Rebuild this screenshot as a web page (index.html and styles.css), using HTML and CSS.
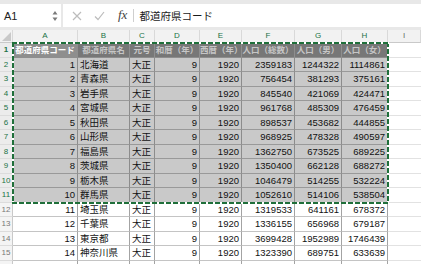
FILE: index.html
```html
<!DOCTYPE html>
<html lang="ja">
<head>
    <meta charset="UTF-8">
    <meta name="viewport" content="width=device-width, initial-scale=1.0">
    <title>都道府県別人口</title>
    <link rel="stylesheet" href="styles.css">
</head>
<body>
    <div class="toolbar">
        <div class="namebox">
            <span>A1</span>
            <svg class="spin" width="6" height="12" viewBox="0 0 6 12"><path d="M3 1 L5.5 4.5 L0.5 4.5 Z M3 11 L5.5 7.5 L0.5 7.5 Z" fill="#7a7a7a"/></svg>
        </div>
        <div class="formula">
            <svg class="btn-x" width="10" height="10" viewBox="0 0 10 10"><path d="M1 1 L9 9 M9 1 L1 9" stroke="#bcbcbc" stroke-width="1.2"/></svg>
            <svg class="btn-ok" width="11" height="10" viewBox="0 0 11 10"><path d="M1 5.5 L4 8.5 L10 1" stroke="#bcbcbc" stroke-width="1.2" fill="none"/></svg>
            <span class="fx">fx</span>
            <span class="divider"></span>
            <span class="value">都道府県コード</span>
        </div>
    </div>

    <div class="sheet-wrap">
        <div class="sheet">
            <div class="row cols">
                <div class="corner"><svg width="9" height="9" viewBox="0 0 9 9"><path d="M9 0 L9 9 L0 9 Z" fill="#c9c9c9"/></svg></div>
                <div class="on">A</div><div class="on">B</div><div class="on">C</div><div class="on">D</div><div class="on">E</div><div class="on">F</div><div class="on">G</div><div class="on">H</div><div>I</div>
            </div>
            <div class="row hdr">
                <div class="rh on">1</div><div class="active">都道府県コード</div><div>都道府県名</div><div>元号</div><div>和暦（年）</div><div>西暦（年）</div><div>人口（総数）</div><div>人口（男）</div><div>人口（女）</div><div class="blank"></div>
            </div>
            <div class="row sel">
                <div class="rh on">2</div><div class="num">1</div><div>北海道</div><div>大正</div><div class="num">9</div><div class="num">1920</div><div class="num">2359183</div><div class="num">1244322</div><div class="num">1114861</div><div class="blank"></div>
            </div>
            <div class="row sel">
                <div class="rh on">3</div><div class="num">2</div><div>青森県</div><div>大正</div><div class="num">9</div><div class="num">1920</div><div class="num">756454</div><div class="num">381293</div><div class="num">375161</div><div class="blank"></div>
            </div>
            <div class="row sel">
                <div class="rh on">4</div><div class="num">3</div><div>岩手県</div><div>大正</div><div class="num">9</div><div class="num">1920</div><div class="num">845540</div><div class="num">421069</div><div class="num">424471</div><div class="blank"></div>
            </div>
            <div class="row sel">
                <div class="rh on">5</div><div class="num">4</div><div>宮城県</div><div>大正</div><div class="num">9</div><div class="num">1920</div><div class="num">961768</div><div class="num">485309</div><div class="num">476459</div><div class="blank"></div>
            </div>
            <div class="row sel">
                <div class="rh on">6</div><div class="num">5</div><div>秋田県</div><div>大正</div><div class="num">9</div><div class="num">1920</div><div class="num">898537</div><div class="num">453682</div><div class="num">444855</div><div class="blank"></div>
            </div>
            <div class="row sel">
                <div class="rh on">7</div><div class="num">6</div><div>山形県</div><div>大正</div><div class="num">9</div><div class="num">1920</div><div class="num">968925</div><div class="num">478328</div><div class="num">490597</div><div class="blank"></div>
            </div>
            <div class="row sel">
                <div class="rh on">8</div><div class="num">7</div><div>福島県</div><div>大正</div><div class="num">9</div><div class="num">1920</div><div class="num">1362750</div><div class="num">673525</div><div class="num">689225</div><div class="blank"></div>
            </div>
            <div class="row sel">
                <div class="rh on">9</div><div class="num">8</div><div>茨城県</div><div>大正</div><div class="num">9</div><div class="num">1920</div><div class="num">1350400</div><div class="num">662128</div><div class="num">688272</div><div class="blank"></div>
            </div>
            <div class="row sel">
                <div class="rh on">10</div><div class="num">9</div><div>栃木県</div><div>大正</div><div class="num">9</div><div class="num">1920</div><div class="num">1046479</div><div class="num">514255</div><div class="num">532224</div><div class="blank"></div>
            </div>
            <div class="row sel">
                <div class="rh on">11</div><div class="num">10</div><div>群馬県</div><div>大正</div><div class="num">9</div><div class="num">1920</div><div class="num">1052610</div><div class="num">514106</div><div class="num">538504</div><div class="blank"></div>
            </div>
            <div class="row">
                <div class="rh">12</div><div class="num">11</div><div>埼玉県</div><div>大正</div><div class="num">9</div><div class="num">1920</div><div class="num">1319533</div><div class="num">641161</div><div class="num">678372</div><div class="blank"></div>
            </div>
            <div class="row">
                <div class="rh">13</div><div class="num">12</div><div>千葉県</div><div>大正</div><div class="num">9</div><div class="num">1920</div><div class="num">1336155</div><div class="num">656968</div><div class="num">679187</div><div class="blank"></div>
            </div>
            <div class="row">
                <div class="rh">14</div><div class="num">13</div><div>東京都</div><div>大正</div><div class="num">9</div><div class="num">1920</div><div class="num">3699428</div><div class="num">1952989</div><div class="num">1746439</div><div class="blank"></div>
            </div>
            <div class="row">
                <div class="rh">15</div><div class="num">14</div><div>神奈川県</div><div>大正</div><div class="num">9</div><div class="num">1920</div><div class="num">1323390</div><div class="num">689751</div><div class="num">633639</div><div class="blank"></div>
            </div>
            <!-- next row only peeks in at the bottom edge -->
            <div class="row">
                <div class="rh"></div><div></div><div></div><div></div><div></div><div></div><div></div><div></div><div></div><div class="blank"></div>
            </div>
        </div>
        <!-- copy marquee around A1:H11 -->
        <div class="marquee"></div>
    </div>
</body>
</html>
```

FILE: styles.css
```css
* { box-sizing: border-box; }
body { margin: 0; width: 421px; height: 264px; overflow: hidden; background: #fff; font-family: "Liberation Sans", "Noto Sans CJK JP", sans-serif; color: #111; }

.toolbar { display: flex; height: 30px; padding: 4px 0 3px; background: #e8e8e8; }
.namebox { width: 61px; background: #fff; display: flex; align-items: center; padding: 0 3px 0 4px; font-size: 11px; color: #222; }
.namebox .spin { margin-left: auto; }
.formula { flex: 1; margin-left: 2px; background: #fff; display: flex; align-items: center; padding-left: 9px; }
.btn-x { margin-right: 12px; }
.btn-ok { margin-right: 13px; }
.fx { font-family: "Liberation Serif", serif; font-style: italic; font-size: 13px; color: #444; margin-top: -2px; }
.divider { width: 1px; height: 13px; background: #cfcfcf; margin: 0 5px 0 6px; }
.value { font-family: "Noto Sans CJK JP", sans-serif; font-size: 10.5px; color: #1a1a1a; }

.sheet-wrap { position: relative; }
.sheet { display: grid; grid-template-columns: 13px 65px 52px 25px 45px 42px 53px 47px 46px 1fr; grid-template-rows: 13px repeat(16, 14.5px); }
.row { display: contents; }
.row > div { overflow: hidden; white-space: nowrap; padding: 0 2px; font-size: 9.5px; line-height: 14px; border-right: 1px solid #a3a3a3; border-bottom: 1px solid #c4c4c4; }
.row > .num { text-align: right; }
.row > .blank { border-right: none; border-bottom-color: #e2e2e2; }

.cols > div { background: #f2f2f2; border-right: 1px solid #d9d9d9; border-bottom: 1px solid #c9c9c9; text-align: center; font-size: 8px; line-height: 12px; color: #666; }
.cols > .on { color: #217346; }
.cols > .corner { padding: 0; position: relative; }
.cols > .corner svg { position: absolute; right: 1px; bottom: 1px; }

.row > .rh { background: #f4f4f4; border-right: 1px solid #c9c9c9; border-bottom: 1px solid #dcdcdc; text-align: center; font-size: 8px; color: #777; padding: 0; }
.row > .rh.on { background: #ececec; color: #217346; }

.hdr > div { background: #777; color: #c6c6c6; font-weight: bold; font-size: 8.5px; text-align: center; padding: 0; border-right-color: #8e8e8e; border-bottom-color: #8e8e8e; }
.hdr > .active { background: #8e8e8e; color: #fff; }
.sel > div { background: #c9c9c9; border-right-color: #8c8c8c; border-bottom-color: #999; }
.row > .blank { background: #fff; }

.marquee {
    position: absolute; left: 12px; top: 12px; width: 377px; height: 162px;
    background:
        repeating-linear-gradient(90deg, #1f6f3a 0 5px, #fff 5px 7px) top / 100% 2px no-repeat,
        repeating-linear-gradient(90deg, #1f6f3a 0 5px, #fff 5px 7px) bottom / 100% 2px no-repeat,
        repeating-linear-gradient(180deg, #1f6f3a 0 5px, #fff 5px 7px) left / 2px 100% no-repeat,
        repeating-linear-gradient(180deg, #1f6f3a 0 5px, #fff 5px 7px) right / 2px 100% no-repeat;
}
```
